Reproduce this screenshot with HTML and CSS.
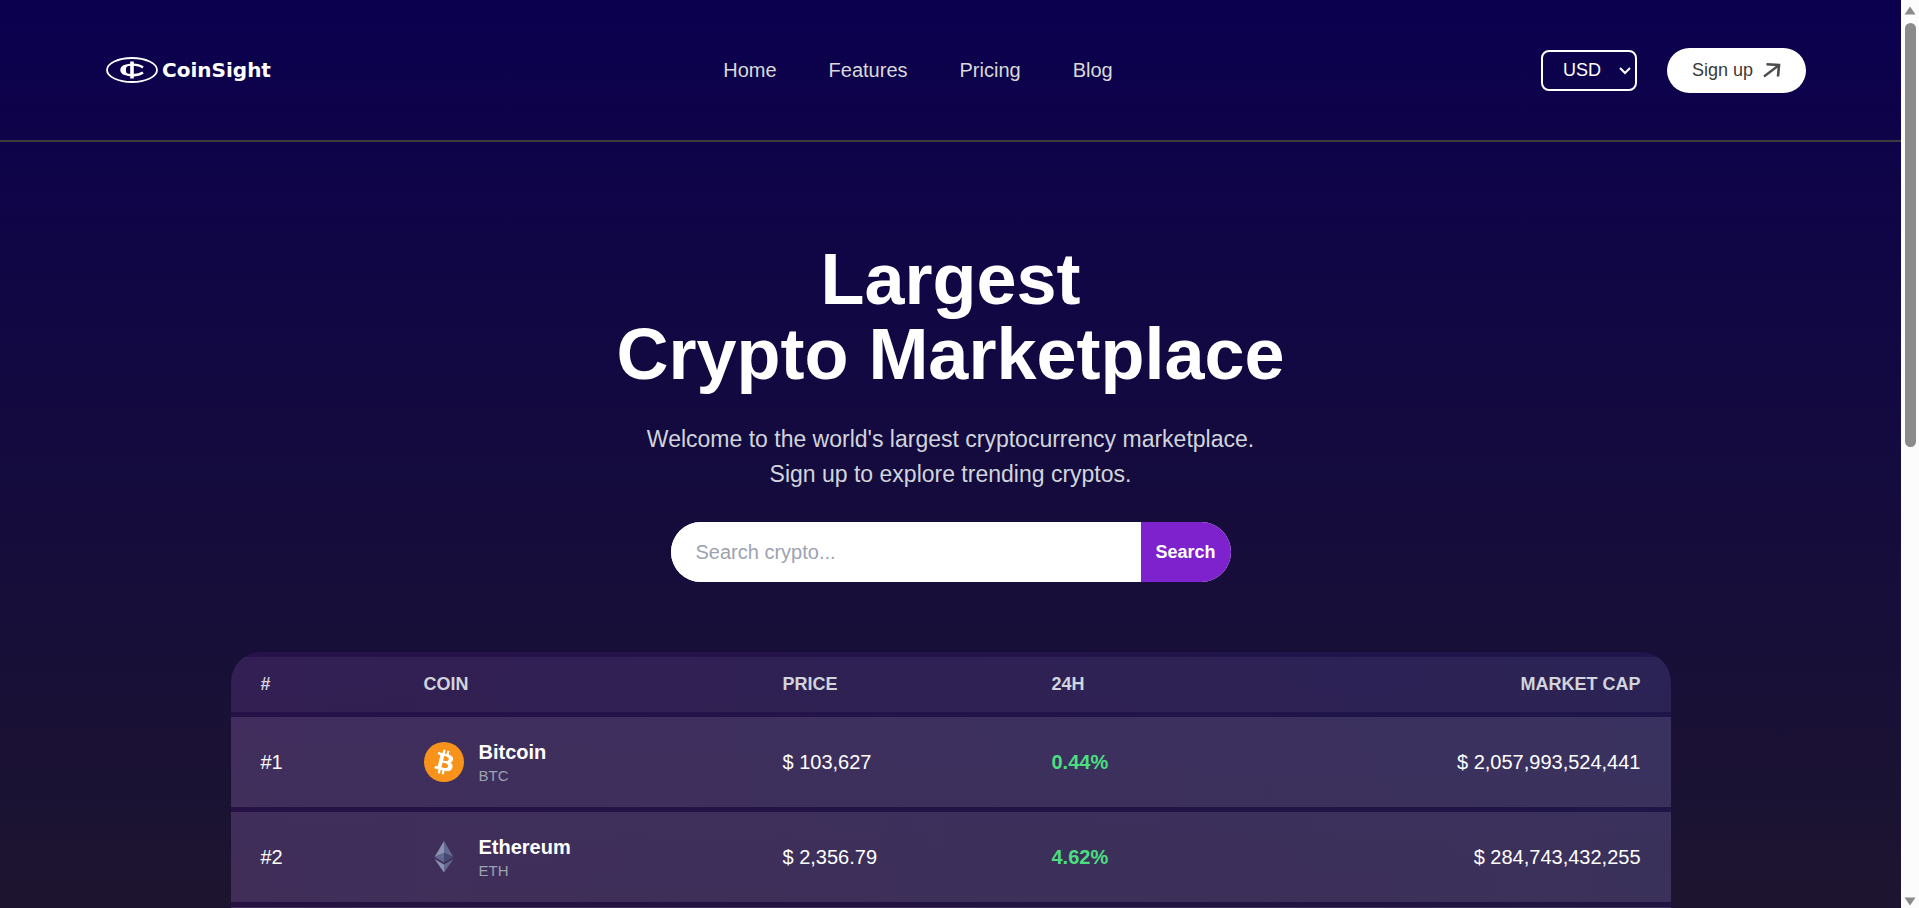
FILE: index.html
```html
<!DOCTYPE html>
<html lang="en">

<head>
    <meta charset="UTF-8">
    <meta name="viewport" content="width=device-width, initial-scale=1.0">
    <title>CoinSight</title>
    <link rel="stylesheet" href="styles.css">
</head>

<body>
    <header class="navbar">
        <a href="#" class="logo">
            <svg class="logo-mark" viewBox="0 0 52 26" aria-hidden="true">
                <ellipse cx="26" cy="13" rx="25" ry="12" fill="none" stroke="#fff" stroke-width="1.8" />
                <path d="M37 10.500C34.500 8.600 31 7.600 27 7.600C20 7.600 15.500 9.800 15.500 12.900C15.500 16 20 18.200 27 18.200C31 18.200 34.500 17.300 37 15.500" fill="none" stroke="#fff" stroke-width="2.400" />
                <path d="M17 8.500C15 11 15 15 17 17.500L21 17C19.500 14.500 19.500 11.500 21 9Z" fill="#fff" />
                <path d="M26 4.500V21.500" stroke="#fff" stroke-width="3.600" />
            </svg>
            <span class="logo-text">CoinSight</span>
        </a>

        <nav class="nav-links">
            <a href="#">Home</a>
            <a href="#">Features</a>
            <a href="#">Pricing</a>
            <a href="#">Blog</a>
        </nav>

        <div class="nav-right">
            <div class="currency">
                <select class="currency-select" aria-label="Currency">
                    <option>USD</option>
                </select>
                <svg class="currency-arrow" viewBox="0 0 12 8" aria-hidden="true">
                    <path d="M1 1L6 6L11 1" fill="none" stroke="#fff" stroke-width="2" />
                </svg>
            </div>
            <button type="button" class="signup">
                Sign up
                <svg class="signup-arrow" viewBox="0 0 18 16" aria-hidden="true">
                    <path d="M1 14.500L15.500 3.500" fill="none" stroke="#4b4b4b" stroke-width="2.200" />
                    <path d="M3.500 2.200L16 3L15 14.500" fill="none" stroke="#4b4b4b" stroke-width="2.600" />
                </svg>
            </button>
        </div>
    </header>

    <main class="home">
        <section class="hero">
            <h1>Largest <br>Crypto Marketplace</h1>
            <p>Welcome to the world's largest cryptocurrency marketplace.<br>Sign up to explore trending cryptos.</p>
            <form class="search">
                <input type="text" class="search-input" placeholder="Search crypto..." aria-label="Search crypto">
                <button type="submit" class="search-button">Search</button>
            </form>
        </section>

        <div class="crypto-panel">
            <table class="crypto-table">
                <thead>
                    <tr>
                        <th class="col-rank">#</th>
                        <th class="col-coin">COIN</th>
                        <th class="col-price">PRICE</th>
                        <th class="col-change">24H</th>
                        <th class="col-cap">MARKET CAP</th>
                    </tr>
                </thead>
                <tbody>
                    <tr>
                        <td>#1</td>
                        <td>
                            <div class="coin">
                                <svg class="coin-icon" viewBox="0 0 32 32" aria-hidden="true">
                                    <circle cx="16" cy="16" r="16" fill="#f7931a" />
                                    <path fill="#fff" d="M23.189 14.020c.314-2.096-1.283-3.223-3.465-3.975l.708-2.840-1.728-.430-.690 2.765c-.454-.114-.920-.220-1.385-.326l.695-2.783L15.596 6l-.708 2.839c-.376-.086-.746-.170-1.104-.260l.002-.009-2.384-.595-.460 1.846s1.283.294 1.256.312c.700.175.826.638.805 1.006l-.806 3.235c.048.012.110.030.180.057l-.183-.045-1.130 4.532c-.086.212-.303.531-.793.410.018.025-1.256-.313-1.256-.313l-.858 1.978 2.250.561c.418.105.828.215 1.231.318l-.715 2.872 1.727.430.708-2.840c.472.127.930.245 1.378.357l-.706 2.828 1.728.430.715-2.866c2.948.558 5.164.333 6.097-2.333.752-2.146-.037-3.385-1.588-4.192 1.130-.260 1.980-1.003 2.207-2.538zm-3.950 5.538c-.533 2.147-4.148.986-5.320.695l.950-3.805c1.172.293 4.929.872 4.370 3.110zm.535-5.569c-.487 1.953-3.495.960-4.470.717l.860-3.450c.975.243 4.118.696 3.610 2.733z" />
                                </svg>
                                <div>
                                    <div class="coin-name">Bitcoin</div>
                                    <div class="coin-symbol">BTC</div>
                                </div>
                            </div>
                        </td>
                        <td>$ 103,627</td>
                        <td class="up">0.44%</td>
                        <td class="cap">$ 2,057,993,524,441</td>
                    </tr>
                    <tr>
                        <td>#2</td>
                        <td>
                            <div class="coin">
                                <svg class="coin-icon" viewBox="0 0 40 40" aria-hidden="true">
                                    <path fill="#8a92b2" d="M20 4L10.500 20L20 16Z" />
                                    <path fill="#62688f" d="M20 4L29.500 20L20 16Z" />
                                    <path fill="#62688f" d="M10.500 20L20 16V25.500Z" />
                                    <path fill="#454a75" d="M29.500 20L20 16V25.500Z" />
                                    <path fill="#8a92b2" d="M10.500 22L20 27.500V35.500Z" />
                                    <path fill="#62688f" d="M29.500 22L20 27.500V35.500Z" />
                                </svg>
                                <div>
                                    <div class="coin-name">Ethereum</div>
                                    <div class="coin-symbol">ETH</div>
                                </div>
                            </div>
                        </td>
                        <td>$ 2,356.79</td>
                        <td class="up">4.62%</td>
                        <td class="cap">$ 284,743,432,255</td>
                    </tr>
                    <tr>
                        <td colspan="5"></td>
                    </tr>
                </tbody>
            </table>
        </div>
    </main>

    <div class="scrollbar" aria-hidden="true">
        <svg class="scroll-arrow" viewBox="0 0 12 9"><path d="M6 0.500L11.500 8.500H0.500Z" fill="#8b8b8b" /></svg>
        <div class="scroll-track">
            <div class="scroll-thumb"></div>
        </div>
        <svg class="scroll-arrow" viewBox="0 0 12 9"><path d="M6 8.500L11.500 0.500H0.500Z" fill="#8b8b8b" /></svg>
    </div>
</body>

</html>
```
FILE: styles.css
```css
* {
    box-sizing: border-box;
    margin: 0;
    padding: 0;
}

body {
    height: 100vh;
    overflow: hidden;
    padding-right: 18px;
    font-family: "Liberation Sans", Arial, sans-serif;
    font-size: 20px;
    color: #fff;
    background: linear-gradient(#0b004e, #1d152f);
}

a {
    color: inherit;
    text-decoration: none;
}

button,
input,
select {
    font-family: inherit;
    border: none;
}

/* navbar */
.navbar {
    display: flex;
    align-items: center;
    justify-content: space-between;
    padding: 25px 5%;
    border-bottom: 2px solid #3c3c3c;
}

.logo {
    display: flex;
    align-items: center;
    gap: 4px;
    width: 200px;
    height: 90px;
    padding-left: 11px;
}

.logo-mark {
    width: 52px;
    height: 26px;
}

.logo-text {
    font-family: "DejaVu Sans", sans-serif;
    font-weight: bold;
    font-size: 20px;
    line-height: 24px;
}

.nav-links {
    display: flex;
    gap: 52px;
    color: #d9d9d9;
}

.nav-right {
    display: flex;
    align-items: center;
    gap: 30px;
}

.currency {
    position: relative;
}

.currency-select {
    display: block;
    appearance: none;
    width: 96px;
    height: 41px;
    padding: 0 20px;
    border: 2px solid #fff;
    border-radius: 8px;
    background: transparent;
    color: #fff;
    font-size: 18px;
}

.currency-arrow {
    position: absolute;
    right: 6px;
    top: 17px;
    width: 12px;
    height: 8px;
    pointer-events: none;
}

.signup {
    display: flex;
    align-items: center;
    gap: 10px;
    height: 45px;
    padding: 0 25px;
    border-radius: 23px;
    background: #fff;
    color: #393939;
    font-size: 18px;
}

.signup-arrow {
    width: 18px;
    height: 16px;
}

/* hero */
.home {
    padding-top: 100px;
}

.hero {
    display: flex;
    flex-direction: column;
    align-items: center;
    gap: 30px;
    text-align: center;
}

.hero h1 {
    font-size: 72px;
    line-height: 75px;
}

.hero p {
    font-size: 23px;
    line-height: 35px;
    color: #d1d5db;
}

.search {
    display: flex;
    width: 560px;
    height: 60px;
    border-radius: 30px;
    overflow: hidden;
    background: #fff;
}

.search-input {
    flex: 1;
    min-width: 0;
    padding: 0 25px;
    background: #fff;
    font-size: 20px;
    outline: none;
}

.search-input::placeholder {
    color: #9ca3af;
}

.search-button {
    width: 90px;
    background: #7e22ce;
    color: #fff;
    font-size: 18px;
    font-weight: bold;
}

/* table */
.crypto-panel {
    max-width: 1440px;
    margin: 70px auto 0;
    border-radius: 30px 30px 0 0;
    overflow: hidden;
    background:
        linear-gradient(transparent, rgba(35, 18, 45, 0.4)),
        linear-gradient(to right, #27124a, #1e164c);
}

.crypto-table {
    width: 100%;
    table-layout: fixed;
    border-collapse: separate;
    border-spacing: 0 5px;
    text-align: left;
}

.crypto-table thead tr {
    background: rgba(255, 255, 255, 0.06);
}

.crypto-table tbody tr {
    background: rgba(255, 255, 255, 0.12);
}

.crypto-table th {
    padding: 15px 30px;
    font-size: 18px;
    line-height: 25px;
    color: #d1d5db;
}

.crypto-table td {
    height: 90px;
    padding: 20px 30px;
}

.crypto-table .col-rank {
    width: 163px;
}

.crypto-table .col-coin {
    width: 359px;
}

.crypto-table .col-price,
.crypto-table .col-change {
    width: 269px;
}

.crypto-table .col-cap,
.crypto-table .cap {
    text-align: right;
}

.crypto-table .up {
    color: #4ade80;
    font-weight: bold;
}

.coin {
    display: flex;
    align-items: center;
    gap: 15px;
}

.coin-icon {
    width: 40px;
    height: 40px;
}

.coin-name {
    font-weight: bold;
    line-height: 28px;
}

.coin-symbol {
    font-size: 15px;
    line-height: 20px;
    color: #9ca3af;
}

/* scrollbar */
.scrollbar {
    position: fixed;
    top: 0;
    right: 0;
    bottom: 0;
    display: flex;
    flex-direction: column;
    align-items: center;
    gap: 8px;
    width: 18px;
    padding: 6px 0 2px;
    background: #fcfcfc;
}

.scroll-arrow {
    width: 12px;
    height: 9px;
}

.scroll-track {
    flex: 1;
}

.scroll-thumb {
    width: 11px;
    height: 49%;
    border-radius: 6px;
    background: #8b8b8b;
}
```
